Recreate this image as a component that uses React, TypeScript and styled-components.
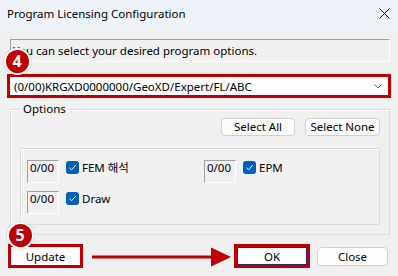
import React from "react";
import styled, { createGlobalStyle } from "styled-components";

const Global = createGlobalStyle`
  html, body { margin: 0; padding: 0; background: #f0f0f0; overflow: hidden; }
  * { box-sizing: border-box; }
`;

const FONT = `"Noto Sans", "Noto Sans CJK KR", sans-serif`;

const Window = styled.div`
  position: relative;
  width: 398px;
  height: 276px;
  background: #f0f0f0;
  font-family: ${FONT};
  font-size: 11.5px;
  color: #000;
  display: flex;
  flex-direction: column;
`;

const TitleBar = styled.div`
  height: 29px;
  background: #eef3f9;
  display: flex;
  align-items: center;
  justify-content: space-between;
  padding: 0 7px 2px 7px;
  font-size: 11.5px;
`;

const CloseX = styled.svg`
  width: 11px;
  height: 11px;
  margin-right: 1px;
`;

const InfoBox = styled.div`
  margin: 10px 8px 0 10px;
  height: 23px;
  border-top: 1px solid #a0a0a0;
  border-left: 1px solid #a0a0a0;
  border-right: 1px solid #ffffff;
  border-bottom: 1px solid #ffffff;
  padding-left: 2px;
  display: flex;
  align-items: center;
`;

const ComboHighlight = styled.div`
  margin: 12px 7px 0 7px;
  height: 24px;
  border: 3px solid #c00000;
  background: #ffffff;
  display: flex;
  align-items: center;
  justify-content: space-between;
  padding: 0 6px 0 4px;
`;

const Group = styled.div`
  position: relative;
  margin: 11px 8px 0 10px;
  height: 126px;
  border: 1px solid #dcdcdc;
  box-shadow: inset 1px 1px 0 #ffffff;
  padding: 8px 9px 0 9px;
  display: flex;
  flex-direction: column;
`;

const Legend = styled.span`
  position: absolute;
  top: -9px;
  left: 10px;
  padding: 0 2px;
  background: #f0f0f0;
  line-height: 16px;
`;

const ButtonRow = styled.div`
  display: flex;
  justify-content: flex-end;
  gap: 10px;
`;

const SmallButton = styled.button<{ $w: number }>`
  width: ${(p) => p.$w}px;
  height: 18px;
  border: 1px solid #d0d0d0;
  border-radius: 4px;
  background: #fdfdfd;
  font-family: ${FONT};
  font-size: 11.5px;
  color: #000;
  padding: 0;
  line-height: 16px;
`;

const Panel = styled.div`
  margin-top: 12px;
  height: 77px;
  border: 1px solid #dcdcdc;
  box-shadow: inset 1px 1px 0 #ffffff;
  padding: 11px 6px 0 6px;
  display: grid;
  grid-template-columns: 177px 1fr;
  row-gap: 8px;
  align-content: start;
`;

const Item = styled.div`
  display: flex;
  align-items: flex-start;
`;

const ValueBox = styled.div`
  width: 32px;
  height: 23px;
  border-top: 1px solid #a0a0a0;
  border-left: 1px solid #a0a0a0;
  border-right: 1px solid #ffffff;
  border-bottom: 1px solid #ffffff;
  padding: 0 0 0 2px;
  line-height: 14px;
  color: #000;
`;

const Check = styled.span`
  width: 13px;
  height: 13px;
  margin: 1px 3px 0 7px;
  border-radius: 3px;
  background: #005fb8;
  display: flex;
  align-items: center;
  justify-content: center;
`;

const CheckLabel = styled.span`
  line-height: 15px;
`;

const BottomRow = styled.div`
  display: flex;
  align-items: flex-start;
  margin-top: 9px;
  padding-left: 8px;
`;

const HighlightButton = styled.button<{ $w: number; $default?: boolean }>`
  width: ${(p) => p.$w}px;
  height: 24px;
  border: 3px solid #c00000;
  background: #ffffff;
  box-shadow: ${(p) => (p.$default ? "inset 0 0 0 1px #2b2b6b" : "none")};
  font-family: ${FONT};
  font-size: 11.5px;
  color: #000;
  padding: 0;
`;

const PlainButton = styled.button`
  width: 71px;
  height: 19px;
  margin: 3px 0 0 7px;
  border: 1px solid #d0d0d0;
  border-radius: 4px;
  background: #fdfdfd;
  font-family: ${FONT};
  font-size: 11.5px;
  color: #000;
  padding: 0;
`;

const Arrow = styled.svg`
  width: 151px;
  height: 24px;
  display: block;
`;

const Badge = styled.div<{ $x: number; $y: number }>`
  position: absolute;
  left: ${(p) => p.$x - 13.5}px;
  top: ${(p) => p.$y - 13.5}px;
  width: 27px;
  height: 27px;
  border-radius: 50%;
  background: #c00000;
  border: 2px solid #ffffff;
  box-shadow: 0 0 0 1px rgba(0, 0, 0, 0.08);
  color: #fff;
  font-family: "Noto Sans", sans-serif;
  font-weight: 700;
  font-size: 16px;
  display: flex;
  align-items: center;
  justify-content: center;
`;

function CheckIcon() {
  return (
    <svg width="9" height="9" viewBox="0 0 9 9">
      <path d="M1.5 4.8 L3.6 6.8 L7.6 2.2" fill="none" stroke="#fff" strokeWidth="1" />
    </svg>
  );
}

function Option({ label }: { label: string }) {
  return (
    <Item>
      <ValueBox>0/00</ValueBox>
      <Check>
        <CheckIcon />
      </Check>
      <CheckLabel>{label}</CheckLabel>
    </Item>
  );
}

export default function App() {
  return (
    <>
      <Global />
      <Window>
        <TitleBar>
          <span>Program Licensing Configuration</span>
          <CloseX viewBox="0 0 11 11">
            <path d="M0.5 0.5 L10.5 10.5 M10.5 0.5 L0.5 10.5" stroke="#1a1a1a" strokeWidth="1" />
          </CloseX>
        </TitleBar>
        <InfoBox>You can select your desired program options.</InfoBox>
        <ComboHighlight>
          <span>(0/00)KRGXD0000000/GeoXD/Expert/FL/ABC</span>
          <svg width="8" height="5" viewBox="0 0 8 5">
            <path d="M0.5 0.5 L4 4 L7.5 0.5" fill="none" stroke="#606060" strokeWidth="1" />
          </svg>
        </ComboHighlight>
        <Group>
          <Legend>Options</Legend>
          <ButtonRow>
            <SmallButton $w={74}>Select All</SmallButton>
            <SmallButton $w={75}>Select None</SmallButton>
          </ButtonRow>
          <Panel>
            <Option label="FEM 해석" />
            <Option label="EPM" />
            <Option label="Draw" />
          </Panel>
        </Group>
        <BottomRow>
          <HighlightButton $w={75}>Update</HighlightButton>
          <Arrow viewBox="0 0 151 24">
            <path d="M9 13 L128 13" stroke="#c00000" strokeWidth="3" />
            <path d="M128 3.5 L148 13 L128 22.5 Z" fill="#c00000" />
          </Arrow>
          <HighlightButton $w={76} $default>
            OK
          </HighlightButton>
          <PlainButton>Close</PlainButton>
        </BottomRow>
        <Badge $x={17} $y={61}>4</Badge>
        <Badge $x={20} $y={235}>5</Badge>
      </Window>
    </>
  );
}
